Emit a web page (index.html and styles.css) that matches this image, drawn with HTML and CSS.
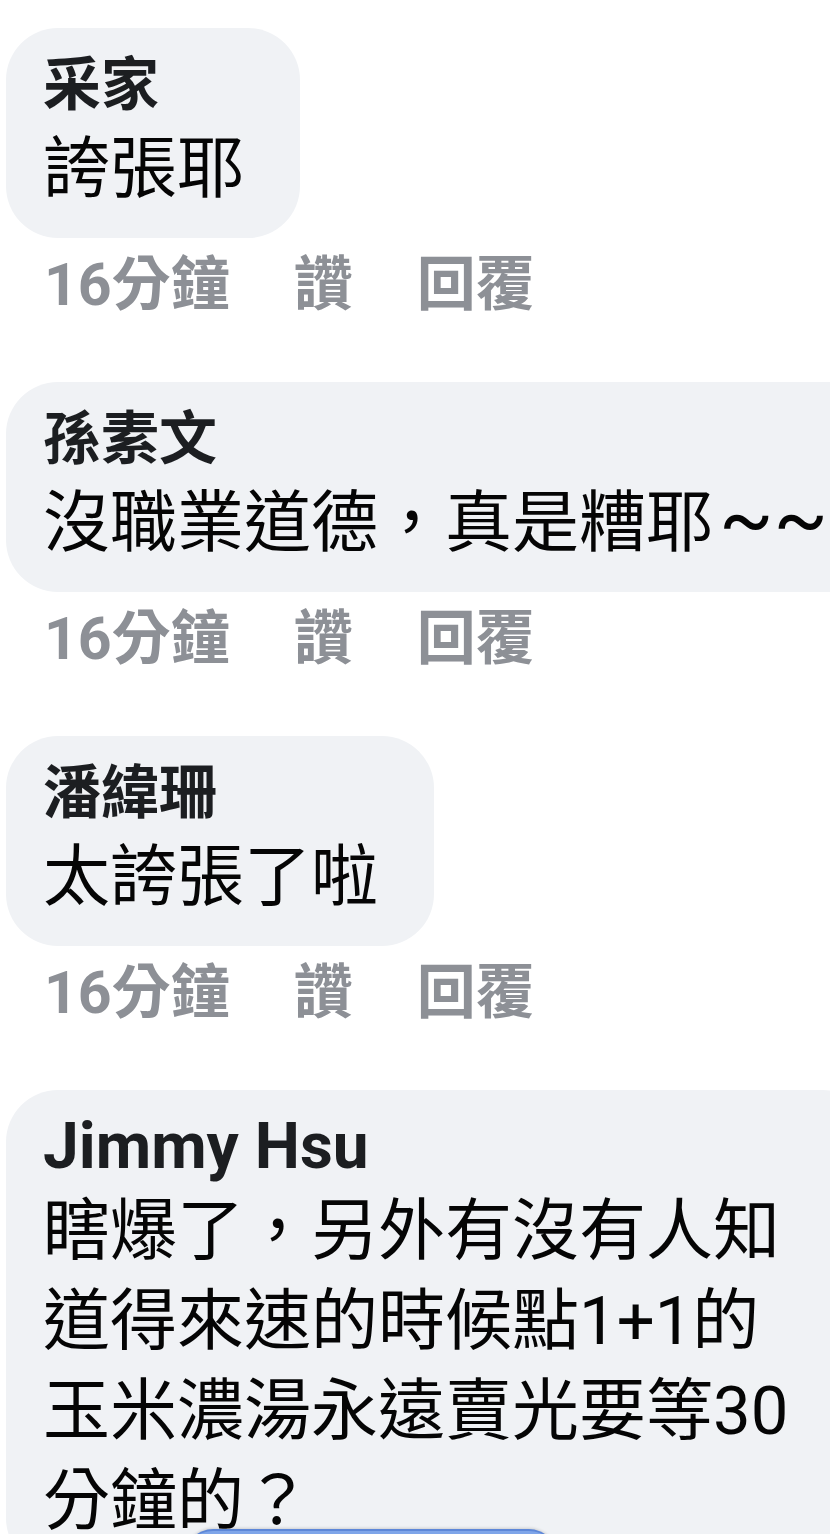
FILE: index.html
```html
<!DOCTYPE html>
<html lang="zh-Hant">
<head>
    <meta charset="UTF-8">
    <meta name="viewport" content="width=device-width, initial-scale=1.0">
    <title>留言</title>
    <link rel="stylesheet" href="styles.css">
</head>
<body>

    <!-- Lista de comentarios -->
    <div class="feed">

        <div class="comment">
            <div class="bubble">
                <div class="name">采家</div>
                <div class="text">誇張耶</div>
            </div>
            <div class="meta">
                <span>16分鐘</span>
                <span class="action">讚</span>
                <span class="action">回覆</span>
            </div>
        </div>

        <div class="comment">
            <div class="bubble">
                <div class="name">孫素文</div>
                <div class="text one-line">沒職業道德，真是糟耶<span class="wave">~~</span></div>
            </div>
            <div class="meta">
                <span>16分鐘</span>
                <span class="action">讚</span>
                <span class="action">回覆</span>
            </div>
        </div>

        <div class="comment">
            <div class="bubble">
                <div class="name">潘緯珊</div>
                <div class="text">太誇張了啦</div>
            </div>
            <div class="meta">
                <span>16分鐘</span>
                <span class="action">讚</span>
                <span class="action">回覆</span>
            </div>
        </div>

        <div class="comment">
            <div class="bubble">
                <div class="name latin">Jimmy Hsu</div>
                <div class="text">瞎爆了，另外有沒有人知道得來速的時候點1+1的玉米濃湯永遠賣光要等30分鐘的？</div>
            </div>
        </div>

        <!-- boton flotante que asoma abajo -->
        <div class="floating-pill"></div>
    </div>

</body>
</html>
```

FILE: styles.css
```css
html, body {
    margin: 0;
    padding: 0;
    background: #ffffff;
    overflow: hidden;
}
body {
    font-family: Roboto, "Noto Sans CJK TC", sans-serif;
}
.feed {
    position: relative;
    height: 1534px;
    padding: 28px 0 0 6px;
    box-sizing: border-box;
    overflow: hidden;
}
.comment {
    margin-bottom: 62px;
}
.bubble {
    width: max-content; /* la burbuja puede salir por la derecha */
    background-color: #f0f2f5;
    border-radius: 52px;
    padding: 18px 56px 24px 37px;
}
.name {
    font-size: 58px;
    font-weight: bold;
    line-height: 78px;
    color: #1c1e21;
    white-space: nowrap;
}
.name.latin {
    font-size: 64px;
}
.text {
    max-width: 776px;
    font-size: 67px;
    line-height: 90px;
    color: #050505;
}
.text.one-line {
    max-width: none;
    white-space: nowrap;
}
.wave {
    font-size: 80px;
    line-height: 0;
    margin-left: 6px;
}
.meta {
    display: flex;
    gap: 64px;
    margin-top: 11px;
    padding-left: 38px;
    font-size: 59px;
    font-weight: bold;
    line-height: 71px;
    color: #8d9096;
}
.floating-pill {
    position: absolute;
    left: 185px;
    top: 1529px;
    width: 372px;
    height: 60px;
    border-radius: 28px;
    background-color: #7ea5e9;
    border-top: 2px solid #5d87d8;
    box-shadow: 0 -1px 3px rgba(0,0,0,0.15);
}
```
